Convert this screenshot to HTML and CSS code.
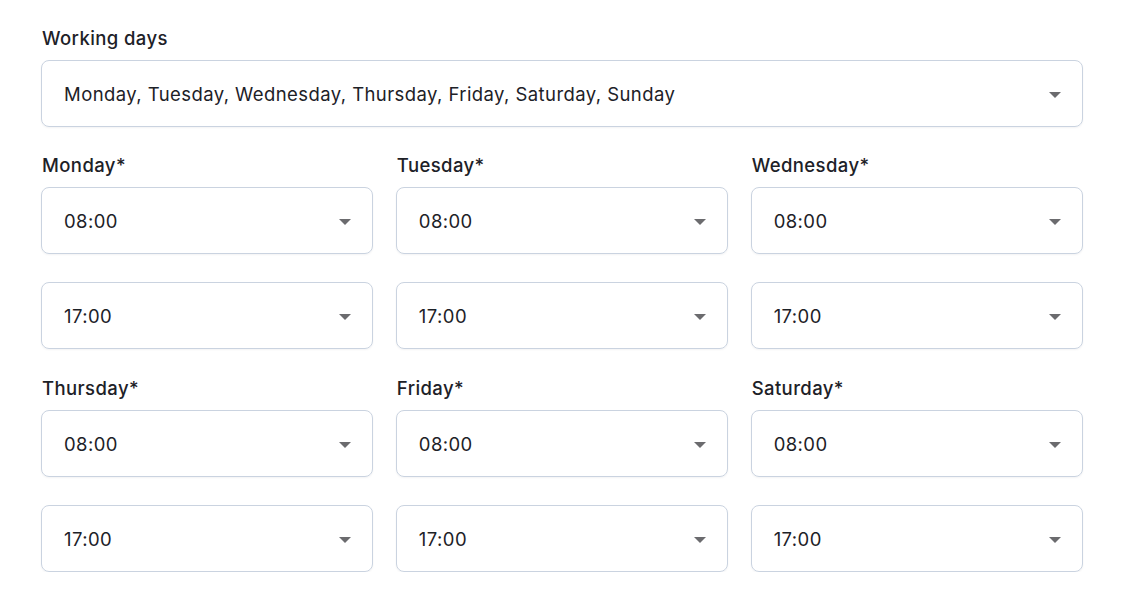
FILE: index.html
```html
<!DOCTYPE html>
<html lang="en">
<head>
<meta charset="utf-8">
<link rel="stylesheet" href="styles.css">
</head>
<body>
<div class="form">
  <div class="field">
    <div class="label">Working days</div>
    <div class="select"><span>Monday, Tuesday, Wednesday, Thursday, Friday, Saturday, Sunday</span><span class="caret"></span></div>
  </div>
  <div class="grid">
    <div class="day">
      <div class="label">Monday*</div>
      <div class="select"><span>08:00</span><span class="caret"></span></div>
      <div class="select"><span>17:00</span><span class="caret"></span></div>
    </div>
    <div class="day">
      <div class="label">Tuesday*</div>
      <div class="select"><span>08:00</span><span class="caret"></span></div>
      <div class="select"><span>17:00</span><span class="caret"></span></div>
    </div>
    <div class="day">
      <div class="label">Wednesday*</div>
      <div class="select"><span>08:00</span><span class="caret"></span></div>
      <div class="select"><span>17:00</span><span class="caret"></span></div>
    </div>
    <div class="day">
      <div class="label">Thursday*</div>
      <div class="select"><span>08:00</span><span class="caret"></span></div>
      <div class="select"><span>17:00</span><span class="caret"></span></div>
    </div>
    <div class="day">
      <div class="label">Friday*</div>
      <div class="select"><span>08:00</span><span class="caret"></span></div>
      <div class="select"><span>17:00</span><span class="caret"></span></div>
    </div>
    <div class="day">
      <div class="label">Saturday*</div>
      <div class="select"><span>08:00</span><span class="caret"></span></div>
      <div class="select"><span>17:00</span><span class="caret"></span></div>
    </div>
  </div>
</div>
</body>
</html>
```
FILE: styles.css
```css
* { box-sizing: border-box; }
html, body { margin: 0; background: #ffffff; }
body {
  font-family: Inter, "Noto Sans", sans-serif;
  color: #1d2127;
}
.form {
  width: 1042px;
  margin-left: 41px;
  padding-top: 26px;
  display: flex;
  flex-direction: column;
  gap: 26px;
}
.field, .day {
  display: flex;
  flex-direction: column;
}
.label {
  font-size: 18.5px;
  line-height: 24px;
  font-weight: 500;
  margin-bottom: 10px;
  padding-left: 1px;
  letter-spacing: 0.4px;
}
.select {
  height: 67px;
  border: 1px solid #cad3e0;
  border-radius: 8px;
  box-shadow: 0 1px 2px rgba(16, 24, 40, 0.05);
  display: flex;
  align-items: center;
  justify-content: space-between;
  padding: 0 21px 0 22px;
  font-size: 18.5px;
  letter-spacing: 0.42px;
}
.day .select + .select { margin-top: 28px; }
.caret {
  width: 0;
  height: 0;
  border-left: 6.5px solid transparent;
  border-right: 6.5px solid transparent;
  border-top: 6px solid #6b6b6e;
  margin-top: 2px;
}
.grid {
  display: grid;
  grid-template-columns: repeat(3, 1fr);
  column-gap: 22.5px;
  row-gap: 27px;
}
```
